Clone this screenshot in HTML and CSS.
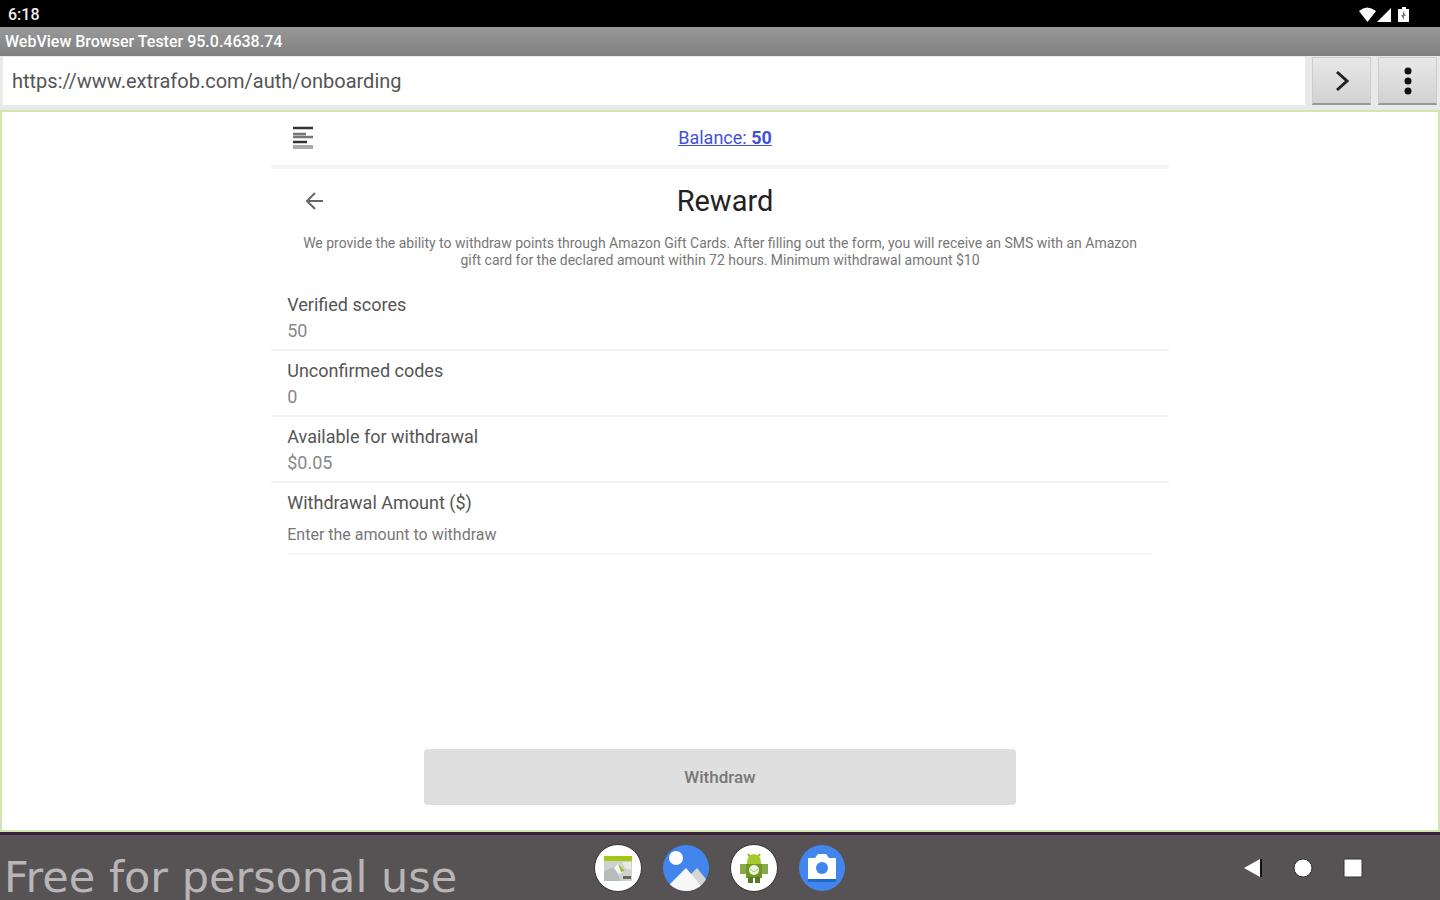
FILE: index.html
```html
<!DOCTYPE html>
<html lang="en">
<head>
  <meta charset="UTF-8" />
  <meta name="viewport" content="width=device-width, initial-scale=1.0" />
  <title>WebView Browser Tester</title>
  <link rel="stylesheet" href="styles.css">
</head>
<body>
  <header>
    <div class="status-bar">
      <span>6:18</span>
      <svg class="status-icons" width="54" height="18" viewBox="0 0 54 18" fill="#fff">
        <path d="M1 5Q9 -2 18 5L9.500 16Z" />
        <path d="M33 2V16H19Z" />
        <path d="M42 3H44V1H48V3H51V16H40V3Z" />
        <path d="M45 5V9H43L46 14V10H48Z" fill="#777" />
      </svg>
    </div>
    <div class="app-title">WebView Browser Tester 95.0.4638.74</div>
    <form class="toolbar">
      <input class="url" type="text" aria-label="URL" value="https://www.extrafob.com/auth/onboarding" />
      <button class="tool-button" type="button" aria-label="Go">
        <svg width="24" height="24" viewBox="0 0 24 24" fill="none" stroke="#222" stroke-width="3">
          <path d="M7 3L17 12L7 21" />
        </svg>
      </button>
      <button class="tool-button" type="button" aria-label="Menu">
        <svg width="24" height="30" viewBox="0 0 24 30" fill="#111">
          <circle cx="12" cy="5" r="3.500" />
          <circle cx="12" cy="15" r="3.500" />
          <circle cx="12" cy="25" r="3.500" />
        </svg>
      </button>
    </form>
  </header>

  <main class="webview">
    <div class="page">
      <div class="page-header">
        <button class="icon-button" type="button" aria-label="Open menu">
          <svg width="20" height="24" viewBox="0 0 20 24" stroke="#555" stroke-width="2.500">
            <path d="M0 2H20" stroke="#333" />
            <path d="M0 8H13M0 11H20" stroke="#777" />
            <path d="M0 16H14" stroke="#333" />
            <path d="M0 21H20" stroke="#aaa" stroke-width="4" />
          </svg>
        </button>
        <a class="balance" href="#">Balance: <b>50</b></a>
      </div>

      <div class="heading">
        <button class="icon-button" type="button" aria-label="Back">
          <svg width="20" height="20" viewBox="0 0 20 20" fill="none" stroke="#666" stroke-width="2">
            <path d="M10 2L2 10L10 18M2 10H18" />
          </svg>
        </button>
        <h1>Reward</h1>
      </div>

      <p class="intro">We provide the ability to withdraw points through Amazon Gift Cards. After filling out the form, you will receive an SMS with an Amazon gift card for the declared amount within 72 hours. Minimum withdrawal amount $10</p>

      <dl class="scores">
        <div class="row">
          <dt>Verified scores</dt>
          <dd>50</dd>
        </div>
        <div class="row">
          <dt>Unconfirmed codes</dt>
          <dd>0</dd>
        </div>
        <div class="row">
          <dt>Available for withdrawal</dt>
          <dd>$0.05</dd>
        </div>
      </dl>

      <div class="field">
        <label for="amount">Withdrawal Amount ($)</label>
        <input type="text" id="amount" placeholder="Enter the amount to withdraw" />
      </div>

      <button class="withdraw" type="button">Withdraw</button>
    </div>
  </main>

  <footer class="nav-bar">
    <span class="watermark">Free for personal use</span>
    <div class="dock">
      <svg width="48" height="48" viewBox="0 0 48 48">
        <circle cx="24" cy="24" r="23.500" fill="#fff" stroke="#333" />
        <path d="M10 13H38V37H10Z" fill="#cfd1cf" />
        <path d="M10 12H38V17H10Z" fill="#a4c614" />
        <path d="M10 27L20 23L27 37H10Z" fill="#b8bbb9" />
        <path d="M28 18H37V26L31 24Z" fill="#e8eae8" />
        <path d="M20 24L25 19L31 27L25 30Z" fill="#f5f5f5" />
        <path d="M24 19L31 27L27 28Z" fill="#97be35" />
        <path d="M29 32H37V35H29Z" fill="#666" />
      </svg>
      <svg width="48" height="48" viewBox="0 0 48 48">
        <defs><clipPath id="round"><circle cx="24" cy="24" r="23" /></clipPath></defs>
        <circle cx="24" cy="24" r="23" fill="#4285ed" />
        <circle cx="14" cy="14" r="7" fill="#fff" />
        <g clip-path="url(#round)">
          <path d="M26 33L35 24L48 40V48H25Z" fill="#d5d5d5" />
          <path d="M4 44L24 24L41 44V48H4Z" fill="#f7f7f7" />
        </g>
      </svg>
      <svg width="48" height="48" viewBox="0 0 48 48">
        <circle cx="24" cy="24" r="23.500" fill="#fff" stroke="#333" />
        <path d="M18 10L21 14M30 10L27 14" stroke="#8fb52a" stroke-width="2" />
        <path d="M17 20Q17 10 24 10T31 20Z" fill="#a4ca2b" />
        <path d="M16 20H32V34H16Z" fill="#6d9825" />
        <path d="M10 20H16V30H10ZM32 20H38V30H32Z" fill="#87a94b" />
        <path d="M18 33H23V39H18ZM25 33H30V39H25Z" fill="#557b1d" />
        <circle cx="24" cy="26" r="5" fill="#edf3df" />
        <path d="M20 25L24 28L28 25" fill="none" stroke="#a9c47a" stroke-width="1" />
      </svg>
      <svg width="48" height="48" viewBox="0 0 48 48">
        <circle cx="24" cy="24" r="23" fill="#4285ed" />
        <path d="M10 35H38V38H10Z" fill="#2267ca" />
        <path d="M10 14H17L20 10H28L31 14H38V35H10Z" fill="#fff" />
        <circle cx="24" cy="24" r="6" fill="#4285ed" />
      </svg>
    </div>
    <div class="nav-buttons">
      <button type="button" aria-label="Back">
        <svg width="24" height="24" viewBox="0 0 24 24"><path d="M3 12L19 3V21Z" fill="#fff" /><path d="M20 3V21" stroke="#111" stroke-width="2" /></svg>
      </button>
      <button type="button" aria-label="Home">
        <svg width="24" height="24" viewBox="0 0 24 24"><circle cx="12" cy="12" r="9" fill="#fff" stroke="#333" /></svg>
      </button>
      <button type="button" aria-label="Recent apps">
        <svg width="24" height="24" viewBox="0 0 24 24"><rect x="3" y="3" width="18" height="18" rx="1" fill="#fff" stroke="#333" /></svg>
      </button>
    </div>
  </footer>
</body>
</html>
```
FILE: styles.css
```css
* {
  box-sizing: border-box;
}
body {
  display: flex;
  flex-direction: column;
  min-height: 100vh;
  margin: 0;
  font-family: Roboto, sans-serif;
  font-size: 18px;
  color: #555;
  background: #fff;
}
button {
  padding: 0;
  border: none;
  background: none;
  font-family: inherit;
  cursor: pointer;
}
svg {
  display: block;
}
.status-bar {
  display: flex;
  justify-content: space-between;
  align-items: center;
  height: 27px;
  padding: 2px 28px 0 8px;
  background: #000;
  color: #eee;
  font-size: 16px;
  font-weight: 500;
}
.app-title {
  height: 29px;
  padding-left: 5px;
  background: linear-gradient(#999, #808080);
  color: #fff;
  font-size: 16px;
  font-weight: 500;
  line-height: 30px;
}
.toolbar {
  display: flex;
  gap: 7px;
  height: 54px;
  padding: 1px 3px 5px;
  background: #e8eaea;
}
.url {
  flex: 1;
  min-width: 0;
  padding: 0 9px;
  border: none;
  background: #fff;
  color: #555;
  font-family: inherit;
  font-size: 20px;
}
.tool-button {
  display: flex;
  justify-content: center;
  align-items: center;
  width: 59px;
  border: 1px solid #ccc;
  border-bottom: 2px solid #999;
  background: linear-gradient(#e8e8e8, #d2d2d2);
}
.webview {
  flex: 1;
  display: flex;
  border: 2px solid #d3e6ae;
}
.page {
  display: flex;
  flex-direction: column;
  width: 62.5%;
  margin: 0 auto;
}
.page-header,
.heading {
  display: grid;
  grid-template-columns: 1fr auto 1fr;
  align-items: center;
}
.page-header {
  height: 57px;
  padding: 0 12px 2px 22px;
  border-bottom: 4px solid #f5f5f5;
}
.icon-button {
  justify-self: start;
}
.balance {
  color: #3f51d5;
}
.heading {
  height: 64px;
  padding: 0 24px 0 34px;
}
h1 {
  margin: 0;
  color: #222;
  font-size: 29px;
  font-weight: 400;
}
.intro {
  margin: 0;
  padding: 2px 24px 0;
  color: #777;
  font-size: 14px;
  line-height: 17px;
  text-align: center;
}
.scores {
  margin: 16px 0 0;
}
.row {
  padding: 8px 16px 5px;
  border-bottom: 2px solid #f2f2f2;
}
dt,
.field label {
  display: block;
  line-height: 24px;
}
dd {
  margin: 0;
  color: #888;
  line-height: 27px;
}
.field {
  padding: 8px 16px 0;
}
.field input {
  display: block;
  width: 100%;
  height: 40px;
  padding: 0;
  border: none;
  border-bottom: 2px solid #f5f5f5;
  color: #555;
  font-family: inherit;
  font-size: 16px;
}
.field input::placeholder {
  color: #777;
}
.withdraw {
  width: 66%;
  height: 56px;
  margin: auto auto 25px;
  border-radius: 4px;
  background: #dfdfdf;
  color: #777;
  font-size: 17px;
  font-weight: 500;
}
.nav-bar {
  display: grid;
  grid-template-columns: minmax(0, 1fr) auto minmax(0, 1fr);
  align-items: center;
  height: 68px;
  border-top: 3px solid #3b1f3d;
  background: #575253;
}
.watermark {
  padding: 18px 0 0 4px;
  color: #b9b5b6;
  font-family: "DejaVu Sans", sans-serif;
  font-size: 43px;
  line-height: 46px;
  white-space: nowrap;
}
.dock {
  display: flex;
  gap: 20px;
}
.nav-buttons {
  display: flex;
  justify-content: flex-end;
  gap: 26px;
  padding-right: 75px;
}
```
